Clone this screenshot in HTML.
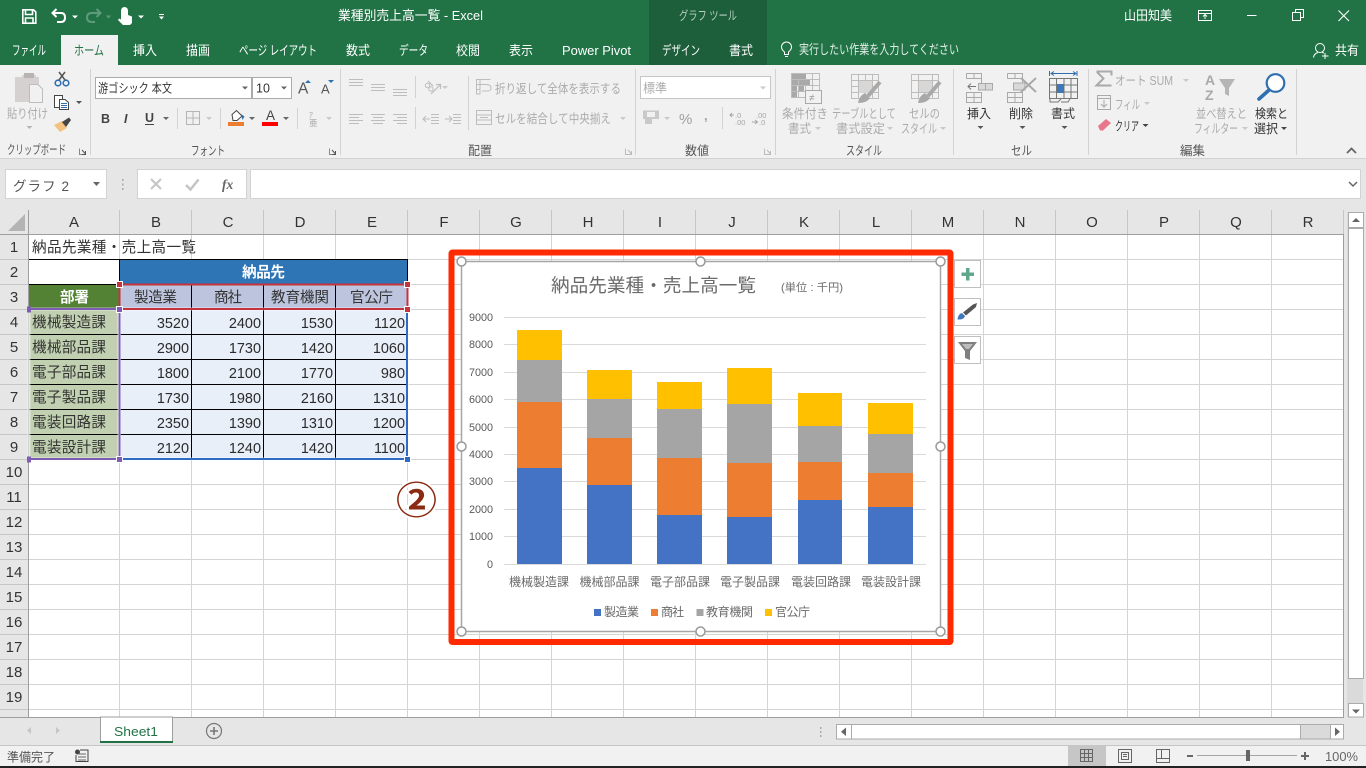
<!DOCTYPE html>
<html lang="ja"><head><meta charset="utf-8"><title>業種別売上高一覧 - Excel</title>
<style>
html,body{margin:0;padding:0;background:#e6e6e6;overflow:hidden}
svg{display:block;position:absolute;left:0;top:0}
text{font-family:"Liberation Sans","Noto Sans CJK JP",sans-serif;font-size:12.5px;fill:#444}
.w{fill:#fff}.d{fill:#ababab}.k{fill:#333}.t{font-size:13px;fill:#fff}
.c{font-size:14.6px;fill:#333}.n{font-size:14.45px;fill:#2b2b2b;text-anchor:end}
.h{font-size:15px;fill:#333;text-anchor:middle}.m{text-anchor:middle}
.a{font-size:10.8px;fill:#595959;text-anchor:end}.l{font-size:12px;fill:#6a6a6a}
</style></head><body>
<svg width="1366" height="768" viewBox="0 0 1366 768" xmlns="http://www.w3.org/2000/svg">
<!-- title bar -->
<rect width="1366" height="65" fill="#217346"/>
<rect x="649" width="118" height="65" fill="#1d5f3b"/>
<rect x="61" y="35" width="57" height="30" fill="#f1f1f1"/>
<!-- QAT -->
<g fill="none" stroke="#fff" stroke-width="1.6">
<path d="M22.8 9.8H33.5L35.8 12V23.2H22.8Z"/>
<path d="M25.5 10V14.5H32.5V10"/><path d="M25.5 23V18H33V23"/>
<path d="M53 13H61Q65 13 65 17.5T61 22H57" stroke-width="2"/>
<path d="M56.5 9L52.5 13L56.5 17" stroke-width="2"/>
<g stroke="#5f9a7c"><path d="M100 13H92Q87 13 87 17.5T92 22H95" stroke-width="2"/><path d="M96.5 9L100.5 13L96.5 17" stroke-width="2"/></g>
</g>
<path d="M72 15.5h6l-3 3z" fill="#fff"/><path d="M106 15.5h5l-2.5 3z" fill="#5f9a7c"/>
<path d="M121 10.5a3.5 3.5 0 0 1 7 0V15l4 1.5V23l-2 2H123l-5-5 1-1.5 2 1z" fill="#fff"/>
<path d="M138 15.5h6l-3 3z" fill="#fff"/>
<path d="M159 14h5v1h-5zM159 16.500h5l-2.5 3z" fill="#fff"/>
<!-- title -->
<text class="t" x="338" y="20" textLength="145" lengthAdjust="spacingAndGlyphs">業種別売上高一覧  -  Excel</text>
<text x="679" y="20" textLength="58" lengthAdjust="spacingAndGlyphs" style="fill:#b5cfc1;font-size:12.5px">グラフ ツール</text>
<text class="t" x="1124" y="20" textLength="48" lengthAdjust="spacingAndGlyphs">山田知美</text>
<g fill="none" stroke="#fff" stroke-width="1">
<path d="M1198.5 10.5H1211.5V20.5H1198.5ZM1198.5 13.5H1211.5M1205 19V15M1203 16.5L1205 14.5L1207 16.5"/>
<path d="M1247 15.5H1256.5"/>
<path d="M1292.5 12.5H1300.5V20.5H1292.5ZM1295.5 12V9.5H1303.5V17.5H1301"/>
<path d="M1338.5 10.5L1349 21M1349 10.5L1338.5 21" stroke-width="1.1"/>
</g>
<!-- tabs -->
<g class="tabs">
<text class="t" x="12" y="55" textLength="34" lengthAdjust="spacingAndGlyphs">ファイル</text>
<text class="t" x="74" y="55" textLength="30" lengthAdjust="spacingAndGlyphs" style="fill:#217346">ホーム</text>
<text class="t" x="133" y="55" textLength="24" lengthAdjust="spacingAndGlyphs">挿入</text>
<text class="t" x="186" y="55" textLength="24" lengthAdjust="spacingAndGlyphs">描画</text>
<text class="t" x="239" y="55" textLength="78" lengthAdjust="spacingAndGlyphs">ページ レイアウト</text>
<text class="t" x="346" y="55" textLength="24" lengthAdjust="spacingAndGlyphs">数式</text>
<text class="t" x="399" y="55" textLength="29" lengthAdjust="spacingAndGlyphs">データ</text>
<text class="t" x="456" y="55" textLength="24" lengthAdjust="spacingAndGlyphs">校閲</text>
<text class="t" x="509" y="55" textLength="24" lengthAdjust="spacingAndGlyphs">表示</text>
<text class="t" x="562" y="55" textLength="69" lengthAdjust="spacingAndGlyphs">Power Pivot</text>
<text class="t" x="662" y="55" textLength="38" lengthAdjust="spacingAndGlyphs">デザイン</text>
<text class="t" x="729" y="55" textLength="24" lengthAdjust="spacingAndGlyphs">書式</text>
<text class="t" x="799" y="54" textLength="160" lengthAdjust="spacingAndGlyphs" style="fill:#e3eee8">実行したい作業を入力してください</text>
<text class="t" x="1335" y="55" textLength="24" lengthAdjust="spacingAndGlyphs">共有</text>
</g>
<path d="M784.5 54.5V52C782 50 781.5 48.5 781.5 47a5 5 0 0 1 10 0c0 1.500-.5 3-3 5V54.5ZM785 56.5H788" fill="none" stroke="#fff"/>
<g fill="none" stroke="#fff"><circle cx="1320" cy="48" r="4.5"/><path d="M1313.5 57.5C1314 54 1316 53 1318 52.5M1322 52.5L1324 53M1325 53V59M1322 56H1328.5"/></g>
<!-- ribbon -->
<rect y="65" width="1366" height="93" fill="#f1f1f1"/>
<rect y="158" width="1366" height="1" fill="#d2d2d2"/>
<rect y="159" width="1366" height="51" fill="#e6e6e6"/>
<g fill="#d2d2d2">
<rect x="90" y="69" width="1" height="86"/><rect x="340" y="69" width="1" height="86"/>
<rect x="635" y="69" width="1" height="86"/><rect x="775" y="69" width="1" height="86"/>
<rect x="953" y="69" width="1" height="86"/><rect x="1088" y="69" width="1" height="86"/><rect x="1296" y="69" width="1" height="86"/>
<rect x="177" y="108" width="1" height="21"/><rect x="220" y="108" width="1" height="21"/><rect x="297" y="108" width="1" height="21"/>
<rect x="415" y="76" width="1" height="22"/><rect x="415" y="107" width="1" height="22"/><rect x="468" y="76" width="1" height="54"/><rect x="722" y="107" width="1" height="22"/>
</g>
<!-- clipboard -->
<path d="M15 77H22V75H36V77H39V86H29V102H15Z" fill="#d5d1d1"/><rect x="24" y="73" width="10" height="5" fill="#b8b4b4"/>
<path d="M29.5 84.5H38L42.5 89V102.5H29.5Z" fill="#f1f1f1" stroke="#bdbdbd"/>
<text class="d" x="7" y="118" textLength="41" lengthAdjust="spacingAndGlyphs">貼り付け</text>
<path d="M26.5 126h6l-3 3z" fill="#b5b5b5"/>
<g fill="none" stroke="#2f6fb0" stroke-width="1.6"><circle cx="58" cy="83" r="2.8"/><circle cx="66" cy="83" r="2.8"/></g>
<path d="M59 80L65 72M65 80L59 72" stroke="#555" stroke-width="1.5"/>
<path d="M54.5 95.5H62.5V107.5H54.5Z" fill="#fff" stroke="#444"/>
<path d="M59.5 99.5H65L68.5 102.5V109.5H59.5Z" fill="#fff" stroke="#444"/>
<path d="M61 103.5H67M61 105.5H67M61 107.5H67" stroke="#2f6fb0"/>
<path d="M76 101h6l-3 3z" fill="#555"/>
<path d="M54 125L62 121L67 128L60 132Z" fill="#f2c27e"/><path d="M62 122L69 117.5L71 120L66 127Z" fill="#444"/>
<text x="7" y="154" textLength="59" lengthAdjust="spacingAndGlyphs" style="fill:#555">クリップボード</text>
<g fill="none" stroke="#888"><path d="M79.5 148.5V154.5H85.5"/><path d="M82 150L85.5 154M85.5 151V154.5H82" stroke="#555"/></g>
<!-- font -->
<rect x="95.5" y="77.5" width="156" height="21" fill="#fff" stroke="#ababab"/>
<rect x="252.5" y="77.5" width="39" height="21" fill="#fff" stroke="#ababab"/>
<text x="98" y="92.5" textLength="74" lengthAdjust="spacingAndGlyphs" style="fill:#333">游ゴシック 本文</text>
<text x="256" y="92.5" style="fill:#333;font-size:12.5px">10</text>
<path d="M242 86.5h6l-3 3zM281 86.5h6l-3 3z" fill="#666"/>
<text x="298" y="93.5" style="font-size:15.5px;fill:#555">A</text><path d="M305 83l3-3 3 3z" fill="#2f6fb0"/>
<text x="321" y="93.5" style="font-size:13px;fill:#555">A</text><path d="M328 80l3 3 3-3z" fill="#2f6fb0"/>
<text x="101" y="123" style="font-size:12.5px;font-weight:bold;fill:#444">B</text>
<text x="124" y="123" style="font-size:12.5px;font-weight:bold;font-style:italic;fill:#444">I</text>
<text x="145" y="122" style="font-size:12.5px;font-weight:bold;fill:#444">U</text>
<rect x="145" y="124" width="9" height="1" fill="#444"/>
<path d="M163 117h6l-3 3zM249 117h6l-3 3zM283 117h6l-3 3z" fill="#666"/>
<path d="M206 117h6l-3 3zM326 117h6l-3 3z" fill="#c9c9c9"/>
<path d="M186.5 111.5H199.5V124.5H186.5ZM193 111.5V124.5M186.5 118H199.5" fill="none" stroke="#b5b5b5"/>
<path d="M232 114.5L236.5 110.5L242 116L237 120.5H233Z" fill="#fff" stroke="#444"/><path d="M241 114l3.500 2.500-2 3.500z" fill="#2f6fb0"/>
<rect x="228" y="122" width="16" height="4" fill="#ed7d31"/>
<text x="266" y="120" style="font-size:13.5px;fill:#444">A</text><rect x="262" y="122" width="16" height="4" fill="#f00"/>
<text x="309" y="118" style="font-size:8px;fill:#aaa">ｱ</text><text x="309" y="126" style="font-size:8.5px;fill:#aaa">亜</text>
<text x="191" y="155" textLength="34" lengthAdjust="spacingAndGlyphs" style="fill:#555">フォント</text>
<g fill="none" stroke="#888"><path d="M329.5 148.5V154.5H335.5"/><path d="M332 150L335.5 154M335.5 151V154.5H332" stroke="#555"/></g>
<!-- alignment -->
<g fill="none" stroke="#bdbdbd">
<path d="M349 79.5H363M349 82.5H363M349 85.5H363"/>
<path d="M371 84.5H385M371 87.5H385M371 90.5H385"/>
<path d="M393 89.5H407M393 92.5H407M393 95.5H407"/>
<path d="M349 114.5H363M349 117.5H359M349 120.5H363M349 123.5H359"/>
<path d="M371 114.5H385M373 117.5H383M371 120.5H385M373 123.5H383"/>
<path d="M393 114.5H407M397 117.5H407M393 120.5H407M397 123.5H407"/>
<path d="M431 114.5H439M431 117.5H439M431 120.5H439M431 123.5H439M423 119H430M426 116L423 119L426 122"/>
<path d="M453 114.5H461M453 117.5H461M453 120.5H461M453 123.5H461M445 119H452M449 116L452 119L449 122"/>
<circle cx="427.5" cy="85.5" r="2.2"/><circle cx="431" cy="89" r="2.2"/>
<path d="M428 81L433 86M431 94L440 85M436 84.5H440.500V89" stroke-width="1.2"/>
<path d="M476.5 79.5H490.5M476.5 84.5H486Q491 84.5 491 88T486 91H482M476.5 89.5H480M476.5 94H480V79.5H476.5Z"/>
<path d="M476.5 110.5H491.5V124.5H476.5ZM476.5 115H491.5M476.5 120H491.5M480 117.5H488"/>
</g>
<path d="M442 86h6l-3 3zM620 117h6l-3 3zM664 117h6l-3 3z" fill="#c9c9c9"/>
<text class="d" x="495" y="93" textLength="126" lengthAdjust="spacingAndGlyphs">折り返して全体を表示する</text>
<text class="d" x="495" y="123" textLength="116" lengthAdjust="spacingAndGlyphs">セルを結合して中央揃え</text>
<text x="468" y="155" textLength="24" lengthAdjust="spacingAndGlyphs" style="fill:#555">配置</text>
<g fill="none" stroke="#bbb"><path d="M625.5 148.5V154.5H631.5"/><path d="M628 150L631.5 154M631.5 151V154.5H628"/></g>
<!-- number -->
<rect x="640.5" y="76.5" width="130" height="22" fill="#fff" stroke="#c6c6c6"/>
<text class="d" x="643" y="92.5" textLength="24" lengthAdjust="spacingAndGlyphs">標準</text>
<path d="M760 86.5h6l-3 3z" fill="#c9c9c9"/>
<path d="M643 110.5H659V119H652V124H645V119H643Z" fill="#c9c9c9"/><rect x="647" y="112" width="8" height="5" fill="#f1f1f1"/>
<text x="679" y="124" style="font-size:15px;fill:#a0a0a0">%</text>
<text x="704" y="120" style="font-size:13px;fill:#a0a0a0;font-weight:bold">,</text>
<text x="735" y="118" style="font-size:7.5px;fill:#a6a6a6">.0</text><text x="735" y="125" style="font-size:7.5px;fill:#a6a6a6">.00</text>
<text x="756" y="118" style="font-size:7.5px;fill:#a6a6a6">.00</text><text x="759" y="125" style="font-size:7.5px;fill:#a6a6a6">.0</text>
<path d="M730 115H734M732 113L730 115L732 117M752 122H757M755 120L757.5 122L755 124" fill="none" stroke="#a6a6a6"/>
<text x="685" y="155" textLength="24" lengthAdjust="spacingAndGlyphs" style="fill:#555">数値</text>
<g fill="none" stroke="#bbb"><path d="M764.5 148.5V154.5H770.5"/><path d="M767 150L770.5 154M770.5 151V154.5H767"/></g>
<!-- styles -->
<g fill="none" stroke="#bdbdbd">
<path d="M791.5 73.5H819.5V97.5H791.5ZM791.5 79.5H819.5M791.5 85.5H819.5M791.5 91.5H819.5M798.5 73.5V97.5M805.5 73.5V97.5M812.5 73.5V97.5"/>
<path d="M851.5 74.5H878.5V98.5H851.5ZM851.5 80.5H878.5M851.5 86.5H878.5M851.5 92.5H878.5M858.5 74.5V98.5M865.500 74.5V98.5M872.5 74.5V98.5"/>
<path d="M911.5 74.5H938.5V98.5H911.5ZM911.5 80.5H938.5M911.5 92.5H938.5M918.5 74.5V98.5M932.5 74.5V98.5"/>
</g>
<g fill="#a9a9a9"><rect x="792" y="74" width="14" height="5"/><rect x="792" y="80" width="6" height="5"/><rect x="799" y="80" width="11" height="5"/><rect x="792" y="86" width="5" height="5"/><rect x="792" y="92" width="5" height="5"/><rect x="799" y="86" width="5" height="5"/></g>
<rect x="805.5" y="90.5" width="16" height="13" fill="#f1f1f1" stroke="#a9a9a9"/>
<text x="809" y="101" style="font-size:10px;fill:#999">≠</text>
<rect x="859" y="81" width="13" height="12" fill="#d9d6d6"/><rect x="919" y="81" width="13" height="11" fill="#d9d6d6"/>
<path d="M880 82L868 96M940 82L928 96" stroke="#a9a9a9" stroke-width="4"/>
<path d="M858 103Q859 96 865 93L870 98Q867 103 858 103ZM918 103Q919 96 925 93L930 98Q927 103 918 103Z" fill="#a9a9a9"/>
<text class="d" x="782" y="118" textLength="46" lengthAdjust="spacingAndGlyphs">条件付き</text>
<text class="d" x="788" y="133" textLength="23" lengthAdjust="spacingAndGlyphs">書式</text>
<text class="d" x="832" y="118" textLength="64" lengthAdjust="spacingAndGlyphs">テーブルとして</text>
<text class="d" x="836" y="133" textLength="49" lengthAdjust="spacingAndGlyphs">書式設定</text>
<text class="d" x="909" y="118" textLength="31" lengthAdjust="spacingAndGlyphs">セルの</text>
<text class="d" x="901" y="133" textLength="36" lengthAdjust="spacingAndGlyphs">スタイル</text>
<path d="M815 127h6l-3 3zM887 127h6l-3 3zM940 127h6l-3 3z" fill="#c9c9c9"/>
<text x="846" y="155" textLength="36" lengthAdjust="spacingAndGlyphs" style="fill:#555">スタイル</text>
<!-- cells -->
<g fill="none" stroke="#a9a9a9">
<path d="M966.5 73.5H981.5V83M974 73.5V78.5M966.5 78.5H981.5M966.5 73.5V78.5"/>
<path d="M966.5 92.5H981.5V102.5H966.5ZM974 92.5V102.5M966.5 97.5H981.5"/>
<path d="M978.5 83.5H992.5V90H978.5ZM985.5 83.5V90" fill="#d9d9d9"/>
<path d="M968 86.5H976M971 83.5L968 86.5L971 89.5" stroke="#777"/>
<path d="M1007.5 73.5H1022.5V83M1015 73.5V78.5M1007.5 78.5H1022.5M1007.5 73.5V78.5"/>
<path d="M1007.5 92.5H1022.5V102.5H1007.5ZM1015 92.5V102.5M1007.5 97.5H1022.5"/>
<path d="M1013.5 83H1025V90H1013.5Z" fill="#d9d9d9"/>
<path d="M1021 78L1036 92M1036 78L1021 92" stroke-width="2"/>
</g>
<path d="M1049.5 78.5H1077.5V98.5H1049.5ZM1049.5 85H1077.5M1049.5 92H1077.5M1056.5 78.5V98.5M1071 78.5V98.5M1064 78.5V98.5" fill="none" stroke="#777"/>
<rect x="1057" y="84" width="7" height="9" fill="#3f78b8"/>
<path d="M1049.5 71V76M1077 71V76M1051 73.5H1076M1054 71.5L1051 73.5L1054 75.5M1073 71.5L1076 73.5L1073 75.5" stroke="#2f6fb0" fill="none"/>
<path d="M1050 98.5V102H1058L1061 99M1061 102H1068L1070 99" fill="none" stroke="#777"/>
<text class="k" x="967" y="118" textLength="24" lengthAdjust="spacingAndGlyphs">挿入</text>
<text class="k" x="1009" y="118" textLength="24" lengthAdjust="spacingAndGlyphs">削除</text>
<text class="k" x="1051" y="118" textLength="24" lengthAdjust="spacingAndGlyphs">書式</text>
<path d="M977.5 126h6l-3 3zM1019.5 126h6l-3 3zM1061.5 126h6l-3 3z" fill="#555"/>
<text x="1011" y="155" textLength="21" lengthAdjust="spacingAndGlyphs" style="fill:#555">セル</text>
<!-- editing -->
<path d="M1096.5 71.5H1111.5V75.5M1111.5 85.5H1096.5L1103.5 78.5L1097 72" fill="none" stroke="#a9a9a9" stroke-width="2"/>
<text class="d" x="1115" y="85" textLength="58" lengthAdjust="spacingAndGlyphs">オート SUM</text>
<path d="M1183 79h6l-3 3zM1144 102h6l-3 3z" fill="#c9c9c9"/>
<path d="M1097.5 95.5H1110.5V109.5H1097.5ZM1097.5 98.5H1110.5M1104 100V107M1101 104L1104 107L1107 104" fill="none" stroke="#a9a9a9"/>
<text class="d" x="1115" y="109" textLength="25" lengthAdjust="spacingAndGlyphs">フィル</text>
<path d="M1098 126L1106 119L1111 123L1103 130.5H1100Z" fill="#e8778c"/>
<text class="k" x="1115" y="130.5" textLength="24" lengthAdjust="spacingAndGlyphs">クリア</text>
<path d="M1142.5 124h6l-3 3z" fill="#444"/>
<text x="1205" y="85" style="font-size:14px;fill:#a9a9a9;font-weight:bold">A</text><text x="1205" y="100" style="font-size:14px;fill:#a9a9a9;font-weight:bold">Z</text>
<path d="M1219 79H1235L1229 88V96L1225 94V88Z" fill="#b5b5b5"/>
<circle cx="1275.5" cy="83" r="8.8" fill="#fff" stroke="#2f6fb0" stroke-width="2.2"/>
<path d="M1268.5 90.5L1259 99" stroke="#2f6fb0" stroke-width="3.6" stroke-linecap="round"/>
<text class="d" x="1196" y="118" textLength="51" lengthAdjust="spacingAndGlyphs">並べ替えと</text>
<text class="d" x="1194" y="133" textLength="44" lengthAdjust="spacingAndGlyphs">フィルター</text>
<path d="M1242 127h6l-3 3z" fill="#c9c9c9"/>
<text class="k" x="1255" y="118" textLength="33" lengthAdjust="spacingAndGlyphs">検索と</text>
<text class="k" x="1254" y="133" textLength="24" lengthAdjust="spacingAndGlyphs">選択</text>
<path d="M1281 127h6l-3 3z" fill="#444"/>
<text x="1180" y="155" textLength="25" lengthAdjust="spacingAndGlyphs" style="fill:#555">編集</text>
<path d="M1347 153L1351.5 148.5L1356 153" fill="none" stroke="#666" stroke-width="1.8"/>
<!-- formula bar -->
<rect x="5.5" y="169.5" width="101" height="29" fill="#fff" stroke="#d2d2d2"/>
<text x="13" y="191" textLength="56" style="font-size:13.5px;fill:#555">グラフ 2</text>
<path d="M93 182h7l-3.5 4z" fill="#666"/>
<path d="M122 179h1.500v2H122zM122 183.500h1.500v2H122zM122 188h1.500v2H122z" fill="#aaa"/>
<rect x="137.5" y="169.5" width="109" height="29" fill="#fff" stroke="#d2d2d2"/>
<rect x="250.5" y="169.5" width="1110" height="29" fill="#fff" stroke="#d2d2d2"/>
<path d="M151 179L161 189M161 179L151 189" stroke="#c4c4c4" stroke-width="2"/>
<path d="M186 185L190.5 189.5L198.5 179.5" fill="none" stroke="#c4c4c4" stroke-width="2.5"/>
<text x="222" y="189" style="font-family:'Liberation Serif',serif;font-style:italic;font-weight:bold;font-size:13.5px;fill:#666">fx</text>
<path d="M1349 182L1353 186L1357 182" fill="none" stroke="#666" stroke-width="1.5"/>
<!-- sheet -->
<rect x="29" y="235" width="1315" height="482" fill="#fff"/>
<rect x="0" y="210" width="1344" height="25" fill="#e6e6e6"/>
<rect x="0" y="235" width="29" height="482" fill="#e6e6e6"/>
<path d="M119.5 235V717M191.5 235V717M263.5 235V717M335.5 235V717M407.5 235V717M479.5 235V717M551.5 235V717M623.5 235V717M695.5 235V717M767.5 235V717M839.5 235V717M911.5 235V717M983.5 235V717M1055.5 235V717M1127.5 235V717M1199.5 235V717M1271.5 235V717
M29 259.5H1343M29 284.5H1343M29 309.5H1343M29 334.5H1343M29 359.5H1343M29 384.5H1343M29 409.5H1343M29 434.5H1343M29 459.5H1343M29 484.5H1343M29 509.5H1343M29 534.5H1343M29 559.5H1343M29 584.5H1343M29 609.5H1343M29 634.5H1343M29 659.5H1343M29 684.5H1343M29 709.5H1343" stroke="#d4d4d4" fill="none"/>
<path d="M119.5 210V234M191.5 210V234M263.5 210V234M335.5 210V234M407.5 210V234M479.5 210V234M551.5 210V234M623.5 210V234M695.5 210V234M767.5 210V234M839.5 210V234M911.5 210V234M983.5 210V234M1055.5 210V234M1127.5 210V234M1199.5 210V234M1271.5 210V234M1343.5 210V234
M0 259.5H28M0 284.5H28M0 309.5H28M0 334.5H28M0 359.5H28M0 384.5H28M0 409.5H28M0 434.5H28M0 459.5H28M0 484.5H28M0 509.5H28M0 534.5H28M0 559.5H28M0 584.5H28M0 609.5H28M0 634.5H28M0 659.5H28M0 684.5H28M0 709.5H28" stroke="#c6c6c6" fill="none"/>
<path d="M0 234.5H1344M28.5 210V717M1343.5 235V717" stroke="#9e9e9e" fill="none"/>
<path d="M25 214V231H8Z" fill="#b4b4b4"/>
<!-- col letters -->
<text class="h" x="74" y="227">A</text><text class="h" x="156" y="227">B</text><text class="h" x="228" y="227">C</text><text class="h" x="300" y="227">D</text><text class="h" x="372" y="227">E</text><text class="h" x="444" y="227">F</text><text class="h" x="516" y="227">G</text><text class="h" x="588" y="227">H</text><text class="h" x="660" y="227">I</text><text class="h" x="732" y="227">J</text><text class="h" x="804" y="227">K</text><text class="h" x="876" y="227">L</text><text class="h" x="948" y="227">M</text><text class="h" x="1020" y="227">N</text><text class="h" x="1092" y="227">O</text><text class="h" x="1164" y="227">P</text><text class="h" x="1236" y="227">Q</text><text class="h" x="1308" y="227">R</text>
<!-- row nums -->
<text class="h" x="14" y="252">1</text><text class="h" x="14" y="277">2</text><text class="h" x="14" y="302">3</text><text class="h" x="14" y="327">4</text><text class="h" x="14" y="352">5</text><text class="h" x="14" y="377">6</text><text class="h" x="14" y="402">7</text><text class="h" x="14" y="427">8</text><text class="h" x="14" y="452">9</text><text class="h" x="14" y="477">10</text><text class="h" x="14" y="502">11</text><text class="h" x="14" y="527">12</text><text class="h" x="14" y="552">13</text><text class="h" x="14" y="577">14</text><text class="h" x="14" y="602">15</text><text class="h" x="14" y="627">16</text><text class="h" x="14" y="652">17</text><text class="h" x="14" y="677">18</text><text class="h" x="14" y="702">19</text><text class="h" x="14" y="727">20</text>
<rect x="0" y="717" width="1366" height="28" fill="#e6e6e6"/>
<!-- table -->
<rect x="119" y="259" width="289" height="26" fill="#2e75b6"/>
<rect x="29" y="284" width="90" height="25" fill="#548235"/>
<rect x="120" y="285" width="288" height="24" fill="#bcc5dd"/>
<rect x="29" y="310" width="90" height="149" fill="#c0d0b0"/>
<rect x="120" y="310" width="288" height="149" fill="#e9eff9"/>
<path d="M29 259.5H408M119.5 259V309M407.5 259V285M29 284.5H408M191.5 285V459M263.5 285V459M335.5 285V459M29 334.5H408M29 359.5H408M29 384.5H408M29 409.5H408M29 434.5H408M119.5 309V459" stroke="#000" fill="none"/>
<text x="32" y="252" textLength="164" class="c">納品先業種・売上高一覧</text>
<text x="242" y="277" textLength="43" class="c" style="fill:#fff;font-weight:bold">納品先</text>
<text x="60" y="302" textLength="29" class="c" style="fill:#fff;font-weight:bold">部署</text>
<text x="134" y="302" textLength="43" class="c">製造業</text><text x="214" y="302" textLength="28" class="c">商社</text><text x="271" y="302" textLength="58" class="c">教育機関</text><text x="350" y="302" textLength="43" class="c">官公庁</text>
<text x="32" y="327" textLength="74" class="c">機械製造課</text><text x="32" y="352" textLength="74" class="c">機械部品課</text><text x="32" y="377" textLength="74" class="c">電子部品課</text><text x="32" y="402" textLength="74" class="c">電子製品課</text><text x="32" y="427" textLength="74" class="c">電装回路課</text><text x="32" y="452" textLength="74" class="c">電装設計課</text>
<text class="n" x="189" y="328">3520</text><text class="n" x="261" y="328">2400</text><text class="n" x="333" y="328">1530</text><text class="n" x="405" y="328">1120</text>
<text class="n" x="189" y="353">2900</text><text class="n" x="261" y="353">1730</text><text class="n" x="333" y="353">1420</text><text class="n" x="405" y="353">1060</text>
<text class="n" x="189" y="378">1800</text><text class="n" x="261" y="378">2100</text><text class="n" x="333" y="378">1770</text><text class="n" x="405" y="378">980</text>
<text class="n" x="189" y="403">1730</text><text class="n" x="261" y="403">1980</text><text class="n" x="333" y="403">2160</text><text class="n" x="405" y="403">1310</text>
<text class="n" x="189" y="428">2350</text><text class="n" x="261" y="428">1390</text><text class="n" x="333" y="428">1310</text><text class="n" x="405" y="428">1200</text>
<text class="n" x="189" y="453">2120</text><text class="n" x="261" y="453">1240</text><text class="n" x="333" y="453">1420</text><text class="n" x="405" y="453">1100</text>
<!-- range highlights -->
<rect x="29" y="309" width="90" height="150" fill="none" stroke="#fff" stroke-width="3" opacity=".55"/>
<rect x="119.5" y="309" width="288" height="150" fill="none" stroke="#fff" stroke-width="3" opacity=".55"/>
<path d="M30 459H119" stroke="#7f5db5" stroke-width="2" fill="none"/><path d="M30 309H119" stroke="#7f5db5" stroke-width="2" fill="none"/><path d="M119.5 309V459" stroke="#7f5db5" stroke-width="2" fill="none"/>
<path d="M122 459H407V310" stroke="#2f6bc5" stroke-width="2" fill="none"/>
<rect x="119.5" y="284.5" width="288" height="24.5" fill="none" stroke="#c5343c" stroke-width="2"/>
<g fill="#c5343c" stroke="#fff"><rect x="116.5" y="281.5" width="6" height="6"/><rect x="404.5" y="281.5" width="6" height="6"/><rect x="404.5" y="306.5" width="6" height="6"/></g>
<g fill="#7f5db5" stroke="#fff"><rect x="27" y="306.5" width="4" height="6" stroke="none"/><rect x="116.5" y="306.5" width="6" height="6"/><rect x="27" y="456.5" width="4" height="6" stroke="none"/><rect x="116.5" y="456.5" width="6" height="6"/></g>
<rect x="404.5" y="456.5" width="6" height="6" fill="#2f6bc5" stroke="#fff"/>
<!-- circled 2 -->
<text x="396" y="514" style="font-size:38px;font-weight:bold;fill:#8a2a12;stroke:#fff;stroke-width:4;paint-order:stroke" textLength="41" lengthAdjust="spacingAndGlyphs">②</text>
<!-- chart -->
<rect x="451.5" y="252.5" width="499" height="389.5" rx="1" fill="none" stroke="#ff2a00" stroke-width="6"/>
<rect x="461.5" y="261.5" width="479" height="370" fill="#fff" stroke="#a6a6a6" stroke-width="1.5"/>
<path d="M504 317.5H926M504 344.5H926M504 372.5H926M504 399.5H926M504 427.5H926M504 454.5H926M504 481.5H926M504 509.5H926M504 536.5H926M504 564.5H926" stroke="#d9d9d9" fill="none"/>
<g>
<rect x="517" y="330" width="45" height="30" fill="#ffc000"/><rect x="517" y="360" width="45" height="42" fill="#a5a5a5"/><rect x="517" y="402" width="45" height="66" fill="#ed7d31"/><rect x="517" y="468" width="45" height="96" fill="#4472c4"/>
<rect x="587" y="370" width="45" height="29" fill="#ffc000"/><rect x="587" y="399" width="45" height="39" fill="#a5a5a5"/><rect x="587" y="438" width="45" height="47" fill="#ed7d31"/><rect x="587" y="485" width="45" height="79" fill="#4472c4"/>
<rect x="657" y="382" width="45" height="27" fill="#ffc000"/><rect x="657" y="409" width="45" height="49" fill="#a5a5a5"/><rect x="657" y="458" width="45" height="57" fill="#ed7d31"/><rect x="657" y="515" width="45" height="49" fill="#4472c4"/>
<rect x="727" y="368" width="45" height="36" fill="#ffc000"/><rect x="727" y="404" width="45" height="59" fill="#a5a5a5"/><rect x="727" y="463" width="45" height="54" fill="#ed7d31"/><rect x="727" y="517" width="45" height="47" fill="#4472c4"/>
<rect x="798" y="393" width="44" height="33" fill="#ffc000"/><rect x="798" y="426" width="44" height="36" fill="#a5a5a5"/><rect x="798" y="462" width="44" height="38" fill="#ed7d31"/><rect x="798" y="500" width="44" height="64" fill="#4472c4"/>
<rect x="868" y="403" width="45" height="31" fill="#ffc000"/><rect x="868" y="434" width="45" height="39" fill="#a5a5a5"/><rect x="868" y="473" width="45" height="34" fill="#ed7d31"/><rect x="868" y="507" width="45" height="57" fill="#4472c4"/>
</g>
<text x="551" y="292" textLength="205" style="font-size:18.6px;fill:#6a6a6a">納品先業種・売上高一覧</text>
<text x="781" y="291" textLength="62" lengthAdjust="spacingAndGlyphs" style="font-size:11px;fill:#6a6a6a">(単位 : 千円)</text>
<text class="a" x="493" y="321">9000</text><text class="a" x="493" y="348">8000</text><text class="a" x="493" y="376">7000</text><text class="a" x="493" y="403">6000</text><text class="a" x="493" y="431">5000</text><text class="a" x="493" y="458">4000</text><text class="a" x="493" y="485">3000</text><text class="a" x="493" y="513">2000</text><text class="a" x="493" y="540">1000</text><text class="a" x="493" y="568">0</text>
<text class="l" x="509" y="586" textLength="60">機械製造課</text><text class="l" x="579.5" y="586" textLength="60">機械部品課</text><text class="l" x="650" y="586" textLength="60">電子部品課</text><text class="l" x="720" y="586" textLength="60">電子製品課</text><text class="l" x="791" y="586" textLength="60">電装回路課</text><text class="l" x="861" y="586" textLength="60">電装設計課</text>
<rect x="594" y="609" width="7" height="7" fill="#4472c4"/><rect x="651" y="609" width="7" height="7" fill="#ed7d31"/><rect x="696.5" y="609" width="7" height="7" fill="#a5a5a5"/><rect x="765" y="609" width="7" height="7" fill="#ffc000"/>
<text class="l" x="604" y="616" textLength="35">製造業</text><text class="l" x="661" y="616" textLength="23">商社</text><text class="l" x="706" y="616" textLength="47">教育機関</text><text class="l" x="775" y="616" textLength="35">官公庁</text>
<g fill="#fff" stroke="#999" stroke-width="1.5"><circle cx="461.5" cy="261.5" r="4.5"/><circle cx="700.5" cy="261.5" r="4.5"/><circle cx="940.5" cy="261.5" r="4.5"/><circle cx="461.5" cy="446.5" r="4.5"/><circle cx="940.5" cy="446.5" r="4.5"/><circle cx="461.5" cy="631.5" r="4.5"/><circle cx="700.5" cy="631.5" r="4.5"/><circle cx="940.5" cy="631.5" r="4.5"/></g>
<!-- chart buttons -->
<g fill="#fff" stroke="#bfbfbf"><rect x="954.5" y="260.5" width="26" height="27"/><rect x="954.5" y="298.5" width="26" height="27"/><rect x="954.5" y="336.5" width="26" height="27"/></g>
<path d="M966 268H969.5V272.5H974V276H969.5V280.5H966V276H961.5V272.5H966Z" fill="#5fa88c"/>
<path d="M957.5 319.5Q958 314 962 313L965 316Q964 320 957.5 319.5Z" fill="#3f78b8"/><path d="M963 312.5L973 304.5L977 303L976 307L966 315.5Z" fill="#555"/>
<path d="M958 342H977L970 351V360L965 358V351Z" fill="#7f7f7f"/><path d="M962 344H973L969 349H966Z" fill="#bdbdbd"/>
<!-- v scrollbar -->
<rect x="1344" y="210" width="22" height="535" fill="#e6e6e6"/>
<rect x="1347" y="212" width="16" height="505" fill="#dadada"/>
<rect x="1348.5" y="212.5" width="15" height="15" fill="#fff" stroke="#ababab"/>
<rect x="1348.5" y="228.5" width="15" height="450" fill="#fff" stroke="#ababab"/>
<rect x="1348.5" y="703.5" width="15" height="13.5" fill="#fff" stroke="#ababab"/>
<path d="M1352 222h8l-4-4zM1352 709.5h8l-4 4z" fill="#666"/>
<!-- tabs bar -->
<path d="M0 717.5H1344" stroke="#9e9e9e"/>
<rect x="100.5" y="717" width="72" height="25" fill="#fff" stroke="#9e9e9e"/>
<rect x="100" y="741" width="73" height="2" fill="#217346"/>
<text x="114" y="736" textLength="44" lengthAdjust="spacingAndGlyphs" style="font-size:13px;fill:#217346">Sheet1</text>
<path d="M31 727V734L27 730.5ZM56 727V734L60 730.5Z" fill="#c6c6c6"/>
<circle cx="214" cy="731" r="7.5" fill="none" stroke="#777" stroke-width="1.2"/><path d="M214 727V735M210 731H218" stroke="#777" stroke-width="1.6"/>
<path d="M820 727h1.500v2H820zM820 731h1.500v2H820zM820 735h1.500v2H820z" fill="#aaa"/>
<rect x="836.5" y="724.5" width="507" height="14.5" fill="#dadada" stroke="#ababab"/>
<rect x="836.5" y="724.5" width="15" height="14.5" fill="#fff" stroke="#ababab"/>
<rect x="851.5" y="724.5" width="449" height="14.5" fill="#fff" stroke="#ababab"/>
<rect x="1330.5" y="724.5" width="13" height="14.5" fill="#fff" stroke="#ababab"/>
<path d="M846 727.5V736L841 731.75ZM1335 727.5V736L1340 731.75Z" fill="#666"/>
<!-- status -->
<rect y="745" width="1366" height="1" fill="#c6c6c6"/>
<rect y="746" width="1366" height="20" fill="#f1f1f1"/>
<rect y="766" width="1366" height="2" fill="#222"/>
<text x="7" y="761.5" textLength="48" lengthAdjust="spacingAndGlyphs" style="fill:#555;font-size:12.5px">準備完了</text>
<circle cx="77.5" cy="752" r="2.5" fill="#444"/><path d="M80 750H88V761.5H76V755" fill="none" stroke="#444"/><path d="M78 754H86M78 757H86M78 760H86" stroke="#666"/>
<rect x="1068" y="746" width="38" height="20" fill="#c6c6c6"/>
<path d="M1080.5 749.5H1092.5V761.5H1080.5ZM1084.5 749.5V761.5M1088.5 749.5V761.5M1080.5 753.5H1092.5M1080.5 757.5H1092.5" fill="none" stroke="#666"/>
<path d="M1118.5 749.5H1131.5V762.5H1118.5ZM1121.5 752.5H1128.5V759.5H1121.5ZM1123 754.5H1127M1123 756.5H1127" fill="none" stroke="#666"/>
<path d="M1156.5 749.5H1169.5V762.5H1156.5ZM1156.5 758.5H1169.5M1161.5 749.5V758.5" fill="none" stroke="#666"/>
<rect x="1187" y="755" width="6" height="2" fill="#666"/>
<rect x="1197" y="755" width="100" height="1" fill="#a6a6a6"/>
<rect x="1246" y="750" width="4" height="11" fill="#666"/>
<path d="M1301 756H1309M1305 752V760" stroke="#666" stroke-width="2"/>
<text x="1325" y="761" textLength="33" lengthAdjust="spacingAndGlyphs" style="fill:#666;font-size:12.5px">100%</text>
</svg>
</body></html>
